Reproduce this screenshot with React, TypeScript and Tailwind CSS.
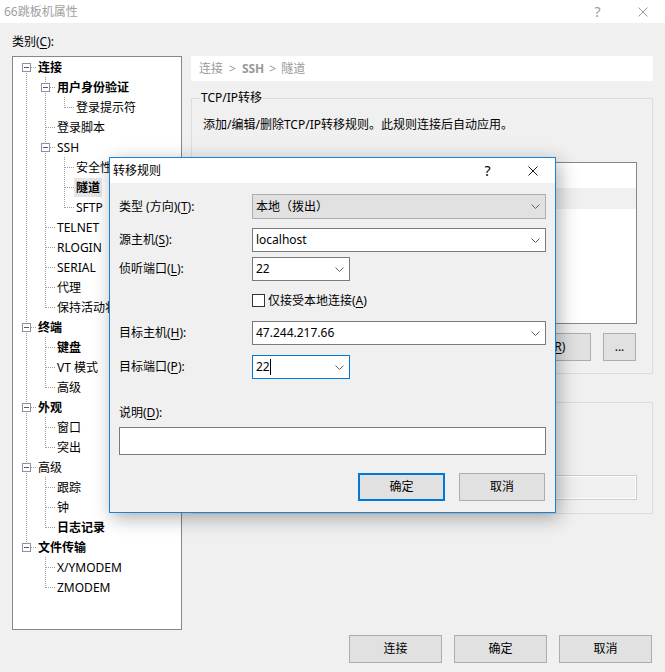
import type { ReactNode } from "react";

interface TreeNode {
  label: string;
  bold?: boolean;
  selected?: boolean;
  children?: TreeNode[];
}

interface FlatRow {
  node: TreeNode;
  depth: number;
  guides: boolean[]; // ancestor levels whose line keeps going
  first: boolean;
  last: boolean;
}

const TREE: TreeNode[] = [
  {
    label: "连接",
    bold: true,
    children: [
      { label: "用户身份验证", bold: true, children: [{ label: "登录提示符" }] },
      { label: "登录脚本" },
      {
        label: "SSH",
        children: [
          { label: "安全性" },
          { label: "隧道", bold: true, selected: true },
          { label: "SFTP" },
        ],
      },
      { label: "TELNET" },
      { label: "RLOGIN" },
      { label: "SERIAL" },
      { label: "代理" },
      { label: "保持活动状态" },
    ],
  },
  {
    label: "终端",
    bold: true,
    children: [{ label: "键盘", bold: true }, { label: "VT 模式" }, { label: "高级" }],
  },
  { label: "外观", bold: true, children: [{ label: "窗口" }, { label: "突出" }] },
  {
    label: "高级",
    children: [{ label: "跟踪" }, { label: "钟" }, { label: "日志记录", bold: true }],
  },
  { label: "文件传输", bold: true, children: [{ label: "X/YMODEM" }, { label: "ZMODEM" }] },
];

function flatten(nodes: TreeNode[], depth: number, guides: boolean[], out: FlatRow[]) {
  nodes.forEach((node, i) => {
    const last = i === nodes.length - 1;
    out.push({ node, depth, guides, first: depth === 0 && i === 0, last });
    if (node.children) flatten(node.children, depth + 1, [...guides, !last], out);
  });
  return out;
}

const ROWS = flatten(TREE, 0, [], []);

// Dotted connector lines + expander box for one tree row
function Guides({ row }: { row: FlatRow }) {
  const w = 23 + 19 * row.depth;
  const lineX = (k: number) => 13.5 + 19 * k;
  const lx = lineX(row.depth);
  return (
    <svg width={w} height={20} className="shrink-0">
      <g stroke="#a0a0a0" strokeDasharray="1 1">
        {row.guides.map((on, k) =>
          on ? <line key={k} x1={lineX(k)} y1={0} x2={lineX(k)} y2={20} /> : null
        )}
        <line x1={lx} y1={row.first ? 10 : 0} x2={lx} y2={row.last ? 11 : 20} />
        <line x1={lx + 0.5} y1={10.5} x2={w} y2={10.5} />
      </g>
      {row.node.children && (
        <g>
          <rect x={lx - 4} y={6.5} width={8} height={8} fill="#ffffff" stroke="#919191" />
          <line x1={lx - 2.5} y1={10.5} x2={lx + 2.5} y2={10.5} stroke="#3d5c99" />
        </g>
      )}
    </svg>
  );
}

function Tree() {
  return (
    <div className="h-[574px] w-[170px] shrink-0 border border-[#828790] bg-white">
      {ROWS.map((row, i) => (
        <div key={i} className="flex h-[20px] items-center">
          <Guides row={row} />
          <span
            className={`whitespace-nowrap px-[2px] leading-[19px] ${row.node.bold ? "font-bold" : ""} ${
              row.node.selected ? "bg-[#e5e5e5]" : ""
            }`}
          >
            {row.node.label}
          </span>
        </div>
      ))}
    </div>
  );
}

function U({ children }: { children: ReactNode }) {
  return <span className="underline underline-offset-[2px]">{children}</span>;
}

function Chevron() {
  return (
    <svg width={9} height={5} className="shrink-0">
      <polyline points="0.5,0.5 4.5,4.5 8.5,0.5" fill="none" stroke="#606060" />
    </svg>
  );
}

function CloseGlyph({ color }: { color: string }) {
  return (
    <svg width={10} height={10}>
      <path d="M0.5 0.5 L9.5 9.5 M9.5 0.5 L0.5 9.5" stroke={color} strokeWidth={1} />
    </svg>
  );
}

function Combo({
  value,
  wide,
  locked,
  focused,
  tall,
}: {
  value: string;
  wide?: boolean;
  locked?: boolean;
  focused?: boolean;
  tall?: boolean;
}) {
  return (
    <div
      className={`flex items-center pl-[3px] pr-[5px] border ${wide ? "w-[294px]" : "w-[98px]"} ${
        tall ? "h-[25px]" : "h-[24px]"
      } ${
        locked
          ? "bg-[#e1e1e1] border-[#adadad]"
          : focused
          ? "bg-white border-[#0078d7]"
          : "bg-white border-[#7a7a7a]"
      }`}
    >
      <span className="whitespace-nowrap">{value}</span>
      {focused && <span className="h-[16px] w-[1px] bg-black" />}
      <span className="flex-1" />
      <Chevron />
    </div>
  );
}

function FieldRow({ label, className, children }: { label: ReactNode; className: string; children: ReactNode }) {
  return (
    <div className={`flex items-center ${className}`}>
      <div className="w-[133px] shrink-0 whitespace-nowrap">{label}</div>
      {children}
    </div>
  );
}

function WinButton({ children, className }: { children: ReactNode; className: string }) {
  return (
    <div
      className={`flex h-[28px] items-center justify-center border border-[#adadad] bg-[#e1e1e1] ${className}`}
    >
      {children}
    </div>
  );
}

function RuleDialog() {
  return (
    <div className="absolute left-[109px] top-[157px] flex h-[356px] w-[447px] flex-col border border-[#1883d7] bg-[#f0f0f0] shadow-[3px_5px_18px_rgba(0,0,0,0.32)]">
      <div className="flex h-[25px] shrink-0 items-center bg-white">
        <span className="pl-[3px]">转移规则</span>
        <div className="ml-auto flex h-full">
          <div className="flex w-[45px] items-center justify-center text-[14px]">?</div>
          <div className="flex w-[45px] items-center justify-center">
            <CloseGlyph color="#1a1a1a" />
          </div>
        </div>
      </div>

      <div className="flex flex-col px-[9px]">
        <FieldRow className="mt-[11px] h-[25px]" label={<>类型 (方向)(<U>T</U>):</>}>
          <Combo value="本地（拨出）" wide locked tall />
        </FieldRow>
        <FieldRow className="mt-[9px] h-[24px]" label={<>源主机(<U>S</U>):</>}>
          <Combo value="localhost" wide />
        </FieldRow>
        <FieldRow className="mt-[5px] h-[24px]" label={<>侦听端口(<U>L</U>):</>}>
          <Combo value="22" />
        </FieldRow>
        <FieldRow className="mt-[13px] h-[13px]" label="">
          <span className="h-[13px] w-[13px] shrink-0 border border-[#333333] bg-white" />
          <span className="ml-[3px] whitespace-nowrap">
            仅接受本地连接(<U>A</U>)
          </span>
        </FieldRow>
        <FieldRow className="mt-[14px] h-[24px]" label={<>目标主机(<U>H</U>):</>}>
          <Combo value="47.244.217.66" wide />
        </FieldRow>
        <FieldRow className="mt-[10px] h-[24px]" label={<>目标端口(<U>P</U>):</>}>
          <Combo value="22" focused />
        </FieldRow>

        <div className="mt-[26px] h-[16px]">
          说明(<U>D</U>):
        </div>
        <div className="mt-[6px] h-[28px] border border-[#7a7a7a] bg-white" />

        <div className="mt-[18px] flex justify-end gap-[14px] pr-[1px]">
          <div className="flex h-[28px] w-[87px] items-center justify-center border-2 border-[#0078d7] bg-[#e1e1e1]">
            确定
          </div>
          <WinButton className="w-[86px]">取消</WinButton>
        </div>
      </div>
    </div>
  );
}

export default function App() {
  return (
    <div className="relative flex h-[672px] w-[665px] flex-col overflow-hidden bg-[#f0f0f0] text-[12px] leading-[16px] text-black font-['Noto_Sans','Noto_Sans_CJK_SC',sans-serif]">
      {/* window title bar */}
      <div className="flex h-[23px] shrink-0 items-center bg-white">
        <span className="pl-[4px] text-[#a0a0a0]">66跳板机属性</span>
        <div className="ml-auto flex h-full">
          <div className="flex w-[45px] items-center justify-center text-[14px] text-[#9a9a9a]">?</div>
          <div className="flex w-[45px] items-center justify-center">
            <CloseGlyph color="#9a9a9a" />
          </div>
        </div>
      </div>

      <div className="flex flex-col px-[12px]">
        <div className="h-[33px] pt-[11px]">
          类别(<U>C</U>):
        </div>

        <div className="flex gap-[9px]">
          <Tree />

          <div className="flex w-[462px] flex-col">
            <div className="flex h-[25px] items-center whitespace-nowrap bg-white pl-[8px] text-[#9a9a9a]">
              <span>连接</span>
              <span className="mx-[6px]">&gt;</span>
              <span className="font-bold">SSH</span>
              <span className="mx-[5px]">&gt;</span>
              <span>隧道</span>
            </div>

            <fieldset className="mt-[9px] border border-[#dcdcdc] pb-[12px]">
              <legend className="ml-[8px] px-[1px] leading-[16px]">TCP/IP转移</legend>
              <div className="mt-[11px] h-[16px] pl-[11px]">
                添加/编辑/删除TCP/IP转移规则。此规则连接后自动应用。
              </div>
              <div className="ml-[9px] mr-[15px] mt-[29px] flex h-[162px] flex-col border border-[#828790] bg-white">
                <div className="h-[25px] shrink-0" />
                <div className="h-[21px] shrink-0 bg-[#f0f0f0]" />
              </div>
              <div className="mr-[16px] mt-[9px] flex justify-end gap-[12px]">
                <WinButton className="w-[90px]">添加(<U>A</U>)</WinButton>
                <WinButton className="w-[90px]">编辑(<U>E</U>)</WinButton>
                <WinButton className="w-[90px]">删除(<U>R</U>)</WinButton>
                <WinButton className="w-[33px]">...</WinButton>
              </div>
            </fieldset>

            <fieldset className="mt-[20px] border border-[#dcdcdc] pb-[13px]">
              <legend className="ml-[8px] px-[1px] leading-[16px]">X11转移</legend>
              <div className="ml-[11px] mt-[20px] flex h-[16px] items-center">
                <span className="h-[13px] w-[13px] border border-[#333333] bg-white" />
                <span className="ml-[3px]">转发X11连接到(<U>X</U>):</span>
              </div>
              <div className="ml-[27px] mr-[15px] mt-[29px] h-[25px] border border-[#cccccc] bg-[#f0f0f0] shadow-[inset_0_0_0_1px_#ffffff]" />
            </fieldset>
          </div>
        </div>
      </div>

      <div className="mt-[5px] flex justify-end gap-[12px] pr-[13px]">
        <WinButton className="w-[93px]">连接</WinButton>
        <WinButton className="w-[93px]">确定</WinButton>
        <WinButton className="w-[93px]">取消</WinButton>
      </div>

      <RuleDialog />
    </div>
  );
}
